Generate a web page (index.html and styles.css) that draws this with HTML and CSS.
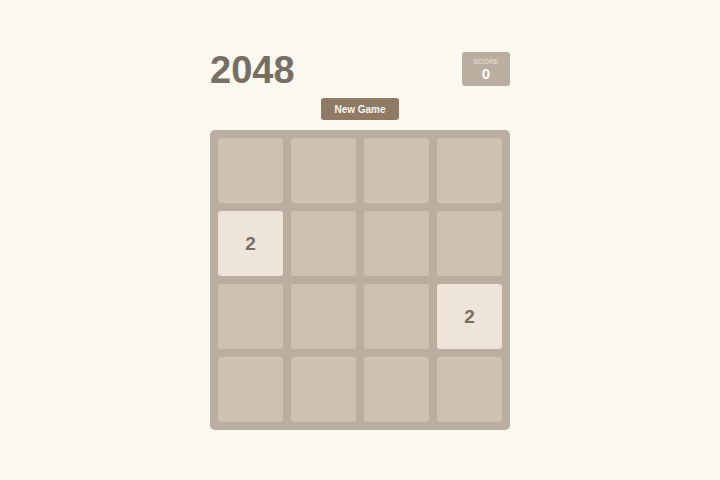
FILE: index.html
```html
<!DOCTYPE html>
<html>
<head>
<meta charset="utf-8">
<link rel="stylesheet" href="styles.css">
</head>
<body>
<div class="game">
  <div class="header">
    <h1 class="title">2048</h1>
    <div class="score">
      <div class="score-label">SCORE</div>
      <div class="score-value">0</div>
    </div>
  </div>
  <div class="controls">
    <button class="new-game">New Game</button>
  </div>
  <div class="board">
    <div class="cell"></div><div class="cell"></div><div class="cell"></div><div class="cell"></div>
    <div class="cell tile-2">2</div><div class="cell"></div><div class="cell"></div><div class="cell"></div>
    <div class="cell"></div><div class="cell"></div><div class="cell"></div><div class="cell tile-2">2</div>
    <div class="cell"></div><div class="cell"></div><div class="cell"></div><div class="cell"></div>
  </div>
</div>
</body>
</html>
```
FILE: styles.css
```css
html, body {
  margin: 0;
  padding: 0;
  background: #faf8ef;
  font-family: "Liberation Sans", Arial, sans-serif;
}
.game {
  width: 300px;
  margin: 0 auto;
  padding-top: 52px;
}
.header {
  display: flex;
  justify-content: space-between;
  align-items: flex-start;
  height: 46px;
}
.title {
  margin: 0;
  font-size: 38px;
  line-height: 34px;
  font-weight: bold;
  color: #776e65;
  padding-top: 1px;
}
.score {
  width: 48px;
  height: 34px;
  background: #bbada0;
  border-radius: 3px;
  display: flex;
  flex-direction: column;
  align-items: center;
  justify-content: center;
}
.score-label {
  font-size: 7px;
  color: #eee4da;
  line-height: 9px;
}
.score-value {
  font-size: 15px;
  font-weight: bold;
  color: #fff;
  line-height: 15px;
}
.controls {
  display: flex;
  justify-content: center;
  margin-bottom: 10px;
}
.new-game {
  width: 78px;
  height: 22px;
  border: none;
  border-radius: 3px;
  background: #8f7a66;
  color: #f9f6f2;
  font-family: "Liberation Sans", Arial, sans-serif;
  font-size: 10px;
  font-weight: bold;
  padding: 0;
}
.board {
  width: 300px;
  height: 300px;
  box-sizing: border-box;
  padding: 8px;
  background: #bbada0;
  border-radius: 5px;
  display: grid;
  grid-template-columns: repeat(4, 1fr);
  grid-template-rows: repeat(4, 1fr);
  gap: 8px;
}
.cell {
  background: #cdc1b4;
  border-radius: 3px;
  display: flex;
  align-items: center;
  justify-content: center;
  font-size: 19px;
  font-weight: bold;
  color: #776e65;
}
.tile-2 {
  background: #eee4da;
}
```
